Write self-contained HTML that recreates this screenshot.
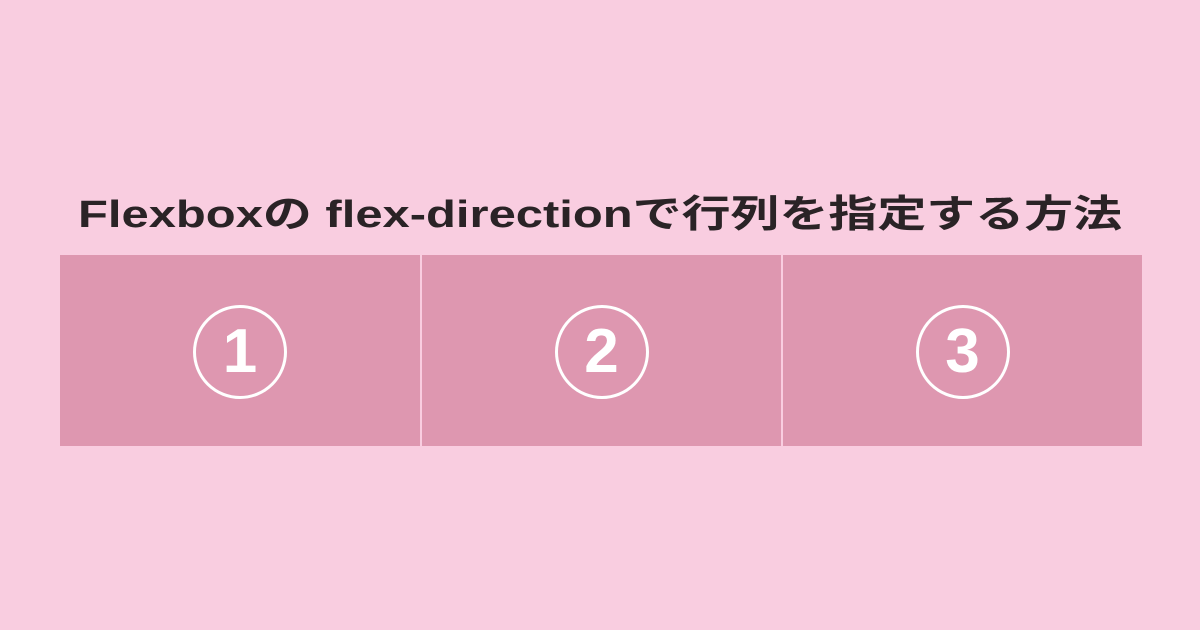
<!DOCTYPE html>
<html><head><meta charset="utf-8"><style>
html,body{margin:0;padding:0}
body{width:1200px;height:630px;background:#f9cde0;position:relative;overflow:hidden;font-family:"Liberation Sans","Noto Sans CJK JP",sans-serif}
svg.t{position:absolute;left:0;top:180px}
.b{position:absolute;top:255px;height:191px;background:#de97b0}
.c{position:absolute;left:50%;top:50%;width:88px;height:88px;margin:-46px 0 0 -47px;border:3.5px solid #fff;border-radius:50%;color:#fff;font-size:62px;font-weight:bold;text-align:center;line-height:88px}
</style></head><body>
<svg class="t" width="1200" height="70"><text x="78" y="47" textLength="1044" lengthAdjust="spacingAndGlyphs" font-family="Liberation Sans, Noto Sans CJK JP, sans-serif" font-size="38" font-weight="bold" fill="#2a2326">Flexboxの flex-directionで行列を指定する方法</text></svg>
<div class="b" style="left:60px;width:360px"><div class="c">1</div></div>
<div class="b" style="left:422px;width:359px"><div class="c">2</div></div>
<div class="b" style="left:783px;width:359px"><div class="c">3</div></div>
</body></html>
